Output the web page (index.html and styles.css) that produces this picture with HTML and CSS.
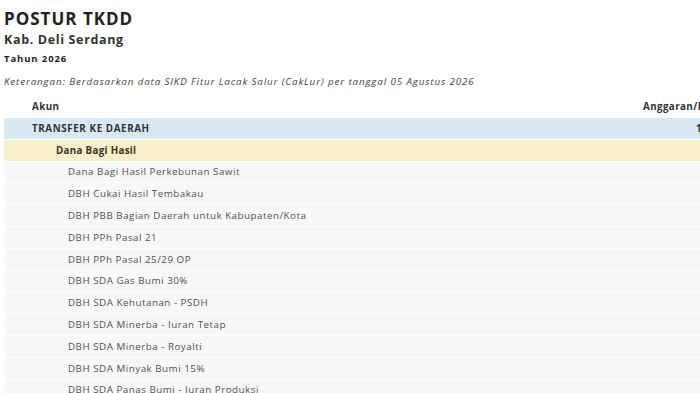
FILE: index.html
```html
<!DOCTYPE html>
<html lang="id">
<head>
<meta charset="utf-8">
<title>Postur TKDD</title>
<link rel="stylesheet" href="styles.css">
</head>
<body>
<div class="page">
  <h1 class="title">POSTUR TKDD</h1>
  <h2 class="region">Kab. Deli Serdang</h2>
  <h3 class="year">Tahun 2026</h3>
  <p class="note">Keterangan: Berdasarkan data SIKD Fitur Lacak Salur (CakLur) per tanggal 05 Agustus 2026</p>
  <table class="tkdd">
    <thead>
      <tr><th class="c-akun">Akun</th><th class="c-num">Anggaran/Pagu</th></tr>
    </thead>
    <tbody>
      <tr class="lvl1"><td class="c-akun">TRANSFER KE DAERAH</td><td class="c-num">1.234.567.890</td></tr>
      <tr class="lvl2"><td class="c-akun">Dana Bagi Hasil</td><td class="c-num"></td></tr>
      <tr class="lvl3"><td class="c-akun">Dana Bagi Hasil Perkebunan Sawit</td><td class="c-num"></td></tr>
      <tr class="lvl3"><td class="c-akun">DBH Cukai Hasil Tembakau</td><td class="c-num"></td></tr>
      <tr class="lvl3"><td class="c-akun">DBH PBB Bagian Daerah untuk Kabupaten/Kota</td><td class="c-num"></td></tr>
      <tr class="lvl3"><td class="c-akun">DBH PPh Pasal 21</td><td class="c-num"></td></tr>
      <tr class="lvl3"><td class="c-akun">DBH PPh Pasal 25/29 OP</td><td class="c-num"></td></tr>
      <tr class="lvl3"><td class="c-akun">DBH SDA Gas Bumi 30%</td><td class="c-num"></td></tr>
      <tr class="lvl3"><td class="c-akun">DBH SDA Kehutanan - PSDH</td><td class="c-num"></td></tr>
      <tr class="lvl3"><td class="c-akun">DBH SDA Minerba - Iuran Tetap</td><td class="c-num"></td></tr>
      <tr class="lvl3"><td class="c-akun">DBH SDA Minerba - Royalti</td><td class="c-num"></td></tr>
      <tr class="lvl3"><td class="c-akun">DBH SDA Minyak Bumi 15%</td><td class="c-num"></td></tr>
      <tr class="lvl3"><td class="c-akun">DBH SDA Panas Bumi - Iuran Produksi</td><td class="c-num"></td></tr>
    </tbody>
  </table>
</div>
</body>
</html>
```
FILE: styles.css
```css
html, body {
  margin: 0;
  padding: 0;
  background: #ffffff;
  overflow: hidden;
}
body {
  font-family: "Open Sans", "Noto Sans", sans-serif;
  color: #333;
}
.page {
  width: 820px;
  padding: 9px 0 0 4px;
}
.title {
  margin: 0;
  font-size: 17px;
  font-weight: 700;
  line-height: 20px;
  letter-spacing: 1px;
  color: #222;
}
.region {
  margin: 1px 0 0;
  font-size: 12.5px;
  line-height: 20px;
  font-weight: 700;
  letter-spacing: 0.65px;
  color: #333;
}
.year {
  margin: 2px 0 0;
  font-size: 9.5px;
  line-height: 14px;
  font-weight: 700;
  letter-spacing: 0.9px;
  color: #222;
}
.note {
  margin: 9px 0 0;
  font-size: 9.8px;
  line-height: 14px;
  font-style: italic;
  letter-spacing: 0.87px;
  color: #444;
}
.tkdd {
  margin-top: 5px;
  width: 790px;
  border-collapse: collapse;
  table-layout: fixed;
  font-size: 9.8px;
}
.tkdd th {
  font-weight: 700;
  color: #333;
  height: 24px;
  text-align: left;
  padding: 0;
  letter-spacing: 0.4px;
}
.tkdd td {
  height: 20.8px;
  padding: 0;
  border-bottom: 1px solid #ffffff;
  letter-spacing: 0.5px;
}
.tkdd .c-akun { padding-left: 28px; width: 611px; }
.tkdd th.c-num { padding-left: 0; }
.tkdd td.c-num { text-align: left; padding-left: 53px; }
.lvl1 td {
  background: #d9e8f5;
  font-weight: 700;
  color: #333;
  letter-spacing: 0.6px;
}
.lvl2 td {
  background: #f8efcb;
  font-weight: 700;
  color: #3a3420;
  letter-spacing: 0.3px;
}
.tkdd .lvl2 .c-akun { padding-left: 52px; }
.lvl3 td {
  background: #f8f8f8;
  color: #505050;
}
.tkdd .lvl3 .c-akun { padding-left: 64px; }
```
